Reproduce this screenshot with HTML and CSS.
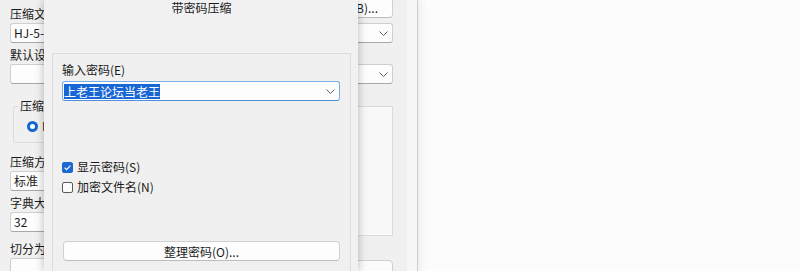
FILE: index.html
```html
<!DOCTYPE html>
<html>
<head>
  <title>带密码压缩</title>
  <link rel="stylesheet" href="styles.css">
</head>
<body>
  <div class="window">
    <div class="form">
      <div class="row-head">
        <span class="label-top">压缩文件名(A)</span>
        <button class="btn browse">浏览(B)...</button>
      </div>
      <div class="combo">
        <span>HJ-5-CG.rar</span>
        <svg class="chev" width="9" height="5" viewBox="0 0 9 5"><path d="M0.5 0.5 L4.5 4.5 L8.5 0.5" fill="none" stroke="#606060" stroke-width="1"/></svg>
      </div>
      <div class="label">默认设置(F)</div>
      <div class="combo">
        <span></span>
        <svg class="chev" width="9" height="5" viewBox="0 0 9 5"><path d="M0.5 0.5 L4.5 4.5 L8.5 0.5" fill="none" stroke="#606060" stroke-width="1"/></svg>
      </div>

      <div class="columns">
        <div class="col-left">
          <fieldset class="group">
            <legend>压缩文件格式</legend>
            <div class="radio-row"><span class="radio on"></span><span>RAR</span></div>
          </fieldset>
          <div class="label first">压缩方式(C)</div>
          <div class="combo"><span>标准</span></div>
          <div class="label">字典大小(I)</div>
          <div class="combo"><span>32</span></div>
          <div class="label split">切分为分卷(V)，大小</div>
          <div class="combo"><span></span></div>
        </div>
        <div class="col-right">
          <div class="options-box"></div>
          <div class="bottom-box"></div>
        </div>
      </div>
    </div>
  </div>

  <div class="dialog">
    <div class="dialog-title">带密码压缩</div>
    <div class="panel">
      <div class="panel-label">输入密码(E)</div>
      <div class="combo focused">
        <span class="selected">上老王论坛当老王</span>
        <svg class="chev" width="9" height="5" viewBox="0 0 9 5"><path d="M0.5 0.5 L4.5 4.5 L8.5 0.5" fill="none" stroke="#606060" stroke-width="1"/></svg>
      </div>

      <div class="checks">
        <div class="check-row">
          <span class="check on">
            <svg width="11" height="11" viewBox="0 0 11 11"><path d="M2.6 5.6 L4.6 7.6 L8.4 3.6" fill="none" stroke="#fff" stroke-width="1.2"/></svg>
          </span>
          <span>显示密码(S)</span>
        </div>
        <div class="check-row">
          <span class="check"></span>
          <span>加密文件名(N)</span>
        </div>
      </div>

      <button class="btn wide">整理密码(O)...</button>
    </div>
  </div>
</body>
</html>
```

FILE: styles.css
```css
body {
  margin: 0;
  background-color: #fcfcfc;
  font-family: "Noto Sans CJK SC", "Noto Sans", sans-serif;
  font-size: 12px;
  color: #1a1a1a;
  overflow: hidden;
  height: 271px;
}

.window {
  width: 417px;
  height: 271px;
  border-right: 1px solid #cdcdcd;
  background: linear-gradient(to right, #f0f0f0 407px, #f6f6f6 407px);
  box-shadow: 3px 0 8px rgba(0, 0, 0, 0.07);
  overflow: hidden;
}

.form {
  display: flex;
  flex-direction: column;
  padding: 0 24px 0 10px;
}

.row-head {
  display: flex;
  justify-content: space-between;
  align-items: flex-start;
  margin-top: -3px;
}

.label-top {
  padding-top: 9px;
  line-height: 16px;
}

.btn {
  font-family: inherit;
  font-size: 12px;
  color: #1a1a1a;
  background-color: #fdfdfd;
  border: 1px solid #d0d0d0;
  border-bottom-color: #bdbdbd;
  border-radius: 4px;
  padding: 0;
}

.browse {
  width: 80px;
  height: 21px;
}

.combo {
  display: flex;
  align-items: center;
  justify-content: space-between;
  height: 20px;
  box-sizing: border-box;
  margin-top: 1px;
  padding: 0 4px 0 3px;
  background-color: #fdfdfd;
  border: 1px solid #cfcfcf;
  border-bottom-color: #a8a8a8;
  border-radius: 3px;
  line-height: 16px;
}

.chev {
  display: block;
}

.label {
  margin-top: 4px;
  line-height: 16px;
}

.columns {
  display: grid;
  grid-template-columns: 1fr 1fr;
  gap: 12px;
  margin-top: 14px;
}

.col-left {
  display: flex;
  flex-direction: column;
}

.group {
  margin: 0 0 0 3px;
  padding: 4px 0 8px 4px;
  border: 1px solid #dcdcdc;
  border-radius: 2px;
}

.group legend {
  padding: 0 2px;
  line-height: 16px;
}

.radio-row {
  display: flex;
  align-items: center;
  gap: 4px;
  padding-left: 9px;
  line-height: 16px;
}

.radio {
  width: 11px;
  height: 11px;
  box-sizing: border-box;
  border-radius: 50%;
  border: 3px solid #1467cf;
  background-color: #fff;
}

.label.first {
  margin-top: 11px;
}

.label.split {
  margin-top: 9px;
}

.col-right {
  display: flex;
  flex-direction: column;
  padding-top: 8px;
}

.options-box {
  height: 128px;
  border: 1px solid #dadada;
  background-color: #f8f8f8;
}

.bottom-box {
  height: 30px;
  margin-top: 24px;
  border: 1px solid #d0d0d0;
  border-radius: 4px;
  background-color: #fbfbfb;
}

/* dialog on top of the window */
.dialog {
  position: absolute;
  left: 44px;
  top: 0;
  width: 314px;
  height: 271px;
  box-sizing: border-box;
  padding: 0 7px 0 8px;
  background-color: #f1f1f1;
  box-shadow: 0 0 9px rgba(0, 0, 0, 0.28);
  overflow: hidden;
}

.dialog-title {
  height: 53px;
  line-height: 16px;
  text-align: center;
}

.panel {
  display: flex;
  flex-direction: column;
  height: 260px;
  padding: 8px 10px 0 9px;
  border: 1px solid #dcdcdc;
  background-color: #f0f0f0;
}

.panel-label {
  line-height: 16px;
}

.combo.focused {
  margin-top: 3px;
  padding: 0 4px 0 1px;
  border-color: #78aee6;
  border-bottom-color: #4d8fdb;
}

.selected {
  background-color: #1766d6;
  color: #fff;
  line-height: 15px;
}

.checks {
  display: flex;
  flex-direction: column;
  gap: 4px;
  margin-top: 58px;
}

.check-row {
  display: flex;
  align-items: center;
  gap: 4px;
  line-height: 16px;
}

.check {
  width: 11px;
  height: 11px;
  box-sizing: border-box;
  border: 1px solid #5a5a5a;
  border-radius: 2px;
  background-color: #fbfbfb;
}

.check.on {
  border-color: #1a6ad2;
  background-color: #1a6ad2;
}

.check svg {
  display: block;
  margin: -1px;
}

.btn.wide {
  height: 20px;
  margin-top: 46px;
  margin-left: 1px;
}
```
